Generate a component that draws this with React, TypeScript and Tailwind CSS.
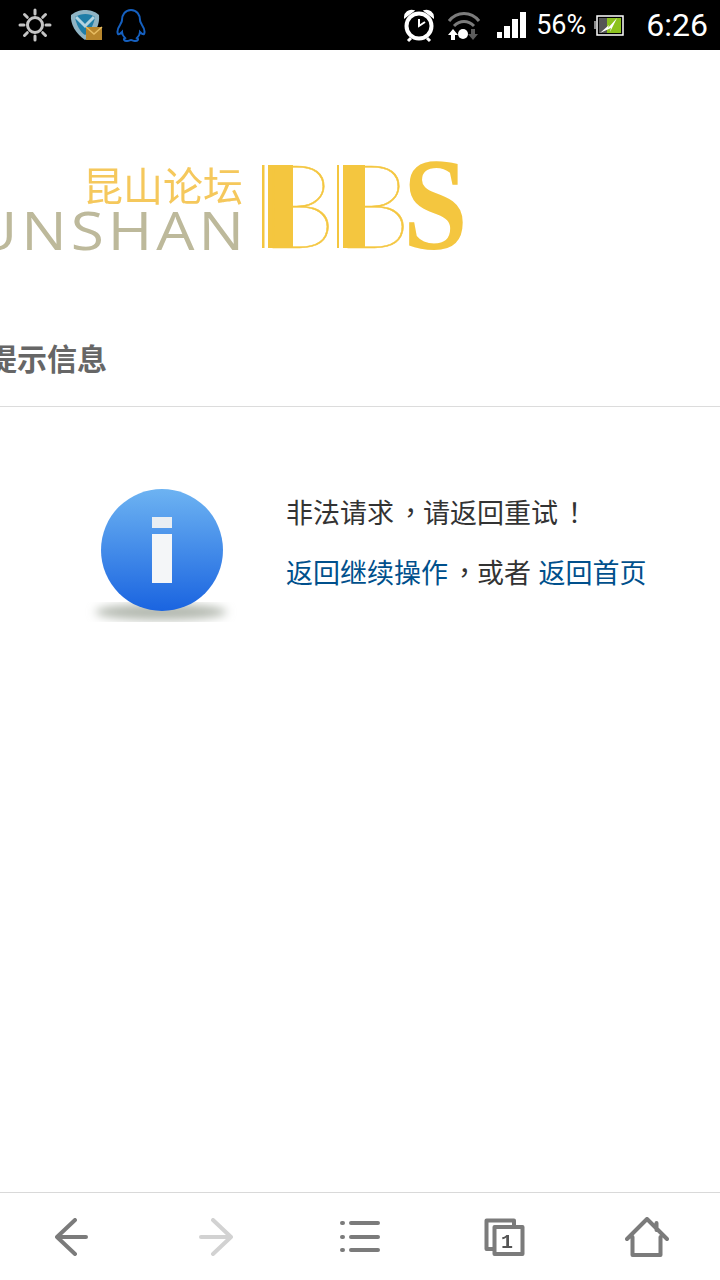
import { FC } from 'react';

const CJK = "font-['Liberation_Sans','Noto_Sans_CJK_SC',sans-serif]";
const PUNCT = "ml-[3px] -mr-[1px] font-['Noto_Sans_CJK_TC',sans-serif]";

const StatusBar: FC = () => (
  <div className="flex h-[50px] shrink-0 items-center justify-between bg-black pl-[17px] pr-[12px]">
    <div className="flex items-center">
      <svg width="36" height="36" viewBox="0 0 36 36" fill="none" stroke="#c4c4c4" strokeWidth="3">
        <circle cx="18" cy="18" r="7.5" />
        <g strokeLinecap="round">
          <path d="M18 3v4M18 29v4M3 18h4M29 18h4M7.5 7.5l2.8 2.8M25.700 25.700l2.800 2.800M7.500 28.500l2.800-2.800M25.700 10.300l2.800-2.800" />
        </g>
      </svg>
      <svg className="ml-[17px]" width="34" height="36" viewBox="0 0 34 36" fill="none">
        <path d="M1 8c5-4 10-5 14-5s10 1 14 5c1 9-3 19-14 25C6 27 0 17 1 8Z" fill="#8fb4c4" />
        <path d="M5 10c6-4 15-4 20 0-1 7-5 15-10 18C10 25 6 17 5 10Z" fill="#1f7ea8" />
        <path d="M6 10l9 9 9-9" stroke="#b4d4e0" strokeWidth="3" />
        <rect x="16" y="20" width="16" height="13" fill="#b8862c" />
        <path d="M16 20l8 7 8-7" stroke="#e8bd63" strokeWidth="1.500" />
      </svg>
      <svg className="ml-[12px]" width="30" height="36" viewBox="0 0 30 36" fill="none" stroke="#1560c0" strokeWidth="2">
        <path d="M15 3c6 0 9 5 9 10 0 2 1 3 2 5 2 3 3 7 2 9-1 1-3-1-4-2 0 3-1 4-3 6 2 1 1 3-2 3-2 0-3-1-4-1s-2 1-4 1c-3 0-4-2-2-3-2-2-3-3-3-6-1 1-3 3-4 2-1-2 0-6 2-9 1-2 2-3 2-5C6 8 9 3 15 3Z" />
      </svg>
    </div>
    <div className="flex items-center">
      <svg width="34" height="36" viewBox="0 0 34 36" fill="none" stroke="white">
        <circle cx="17" cy="19" r="12.500" strokeWidth="4" />
        <path d="M17 12v7l6-4" strokeWidth="2" />
        <path d="M3 10c0-4 4-7 8-6ZM31 10c0-4-4-7-8-6Z" fill="white" strokeWidth="2" />
        <path d="M9 31l-3 3M25 31l3 3" strokeWidth="3" />
      </svg>
      <svg className="ml-[11px]" width="34" height="36" viewBox="0 0 34 36" fill="none">
        <path d="M2 14c8-10 22-10 30 0" stroke="#7c7c7c" strokeWidth="3" />
        <path d="M7 19c6-6 14-6 20 0" stroke="#7c7c7c" strokeWidth="3" />
        <circle cx="16" cy="27" r="5" fill="white" />
        <path d="M6 22l-5 6h3v5h4v-5h3Z" fill="white" />
        <path d="M26 33l5-6h-3v-5h-4v5h-3Z" fill="#5c5c5c" />
      </svg>
      <div className="ml-[16px] flex h-[26px] items-end gap-[2px]">
        <div className="h-[6px] w-[5px] bg-white" />
        <div className="h-[12px] w-[6px] bg-white" />
        <div className="h-[19px] w-[6px] bg-white" />
        <div className="h-[26px] w-[6px] bg-white" />
      </div>
      <span className="ml-[10px] font-['Roboto',sans-serif] text-[27px] leading-none text-white">56%</span>
      <svg className="ml-[8px]" width="30" height="24" viewBox="0 0 30 24" fill="none">
        <rect x="0" y="8" width="2" height="8" fill="#888" />
        <rect x="3" y="3" width="26" height="19" stroke="white" strokeWidth="1.500" />
        <rect x="5" y="5" width="8" height="15" fill="#555" />
        <rect x="13" y="5" width="14" height="15" fill="#8cc21e" />
        <path d="M6 20l9-8-1 3 9-10-7 14 1-4Z" fill="white" />
      </svg>
      <span className="ml-[22px] font-['Roboto',sans-serif] text-[32px] leading-none text-white">6:26</span>
    </div>
  </div>
);

const Logo: FC = () => (
  <svg className="mt-[100px] shrink-0 blur-[0.4px]" width="480" height="110" viewBox="0 0 480 110">
    <text x="83" y="51" fontSize="40" fontFamily="'Noto Sans CJK SC',sans-serif" fill="#f5c85c">
      昆山论坛
    </text>
    <text transform="translate(248 100) scale(1.14 1)" textAnchor="end" fontSize="53" letterSpacing="3.500" fontFamily="'Open Sans',sans-serif" fill="#bdb99b">
      KUNSHAN
    </text>
    <g fill="#f4c63f">
      <rect x="262" y="15" width="2.500" height="83" />
      <rect x="268" y="15" width="25" height="83" />
      <rect x="337" y="15" width="2" height="83" />
      <rect x="343" y="15" width="22" height="83" />
    </g>
    <g fontFamily="'Lato','Inter',sans-serif" fontSize="116" fontWeight="100" fill="#f4c63f" stroke="#f4c63f" strokeWidth="0.500">
      <text transform="translate(258 98) scale(1.1 1)">B</text>
      <text transform="translate(333 98) scale(1.1 1)">B</text>
    </g>
    <text transform="translate(403 99) scale(0.88 1)" fontFamily="'Liberation Serif',serif" fontWeight="700" fontSize="132" fill="#f4c63f">
      S
    </text>
  </svg>
);

const InfoIcon: FC = () => (
  <svg className="shrink-0 blur-[0.5px]" width="160" height="150" viewBox="0 0 160 150">
    <defs>
      <linearGradient id="ball" x1="0" y1="0" x2="0" y2="1">
        <stop offset="0" stopColor="#6db3f2" />
        <stop offset="1" stopColor="#1a64e0" />
      </linearGradient>
      <filter id="soft">
        <feGaussianBlur stdDeviation="5" />
      </filter>
    </defs>
    <ellipse cx="81" cy="132" rx="66" ry="8" fill="#b4b9b0" filter="url(#soft)" />
    <circle cx="82" cy="70" r="61" fill="url(#ball)" />
    <rect x="72" y="37" width="20" height="11" fill="#e9eef3" />
    <rect x="72" y="54" width="20" height="49" fill="#f4f6f8" />
  </svg>
);

const NavIcon: FC<{ d: string; color?: string }> = ({ d, color = '#7b7b7b' }) => (
  <svg className="blur-[0.3px]" width="48" height="48" viewBox="0 0 48 48" fill="none" stroke={color} strokeWidth="4" strokeLinecap="round" strokeLinejoin="round">
    <path d={d} />
  </svg>
);

const BottomBar: FC = () => (
  <div className="grid h-[88px] shrink-0 grid-cols-5 items-center justify-items-center border-t border-[#d9d9d9]">
    <NavIcon d="M9 24 27 7M9 24l18 17M9 24h29" />
    <NavIcon color="#d2d2d2" d="M39 24 21 7M39 24 21 41M39 24H9" />
    <NavIcon d="M6 10h1M15 10h27M6 24h1M15 24h27M6 37h1M15 37h27" />
    <svg className="blur-[0.3px]" width="48" height="48" viewBox="0 0 48 48" fill="none" stroke="#7b7b7b" strokeWidth="4" strokeLinejoin="round">
      <path d="M13 36H6.500V7.500H34V14" />
      <rect x="14.500" y="14" width="28" height="27" />
      <text x="27" y="35" textAnchor="middle" fontSize="20" fontWeight="700" fontFamily="'Liberation Mono',monospace" fill="#555" stroke="none">
        1
      </text>
    </svg>
    <NavIcon d="M3 26 23 6l20 20M8.500 24v18h28V24M32.500 10v7" />
  </div>
);

const App: FC = () => (
  <div className={`flex h-[1280px] w-[720px] flex-col overflow-hidden bg-white ${CJK}`}>
    <StatusBar />
    <Logo />
    <div className="mt-[80px] border-b border-[#dcdcdc] pb-[26px]">
      <h1 className="-ml-[13px] text-[30px] font-bold leading-[40px] text-[#666]">提示信息</h1>
    </div>
    <div className="mt-[73px] flex pl-[80px]">
      <InfoIcon />
      <div className="ml-[46px] pt-[14px] text-[27px] leading-[36px] text-[#333]">
        <p>
          非法请求<span className={PUNCT}>，</span>请返回重试<span className={PUNCT}>！</span>
        </p>
        <p className="mt-[22px]">
          <a className="text-[#00508c]">返回继续操作</a>
          <span className={PUNCT}>，</span>或者 <a className="text-[#00508c]">返回首页</a>
        </p>
      </div>
    </div>
    <div className="flex-1" />
    <BottomBar />
  </div>
);

export default App;
